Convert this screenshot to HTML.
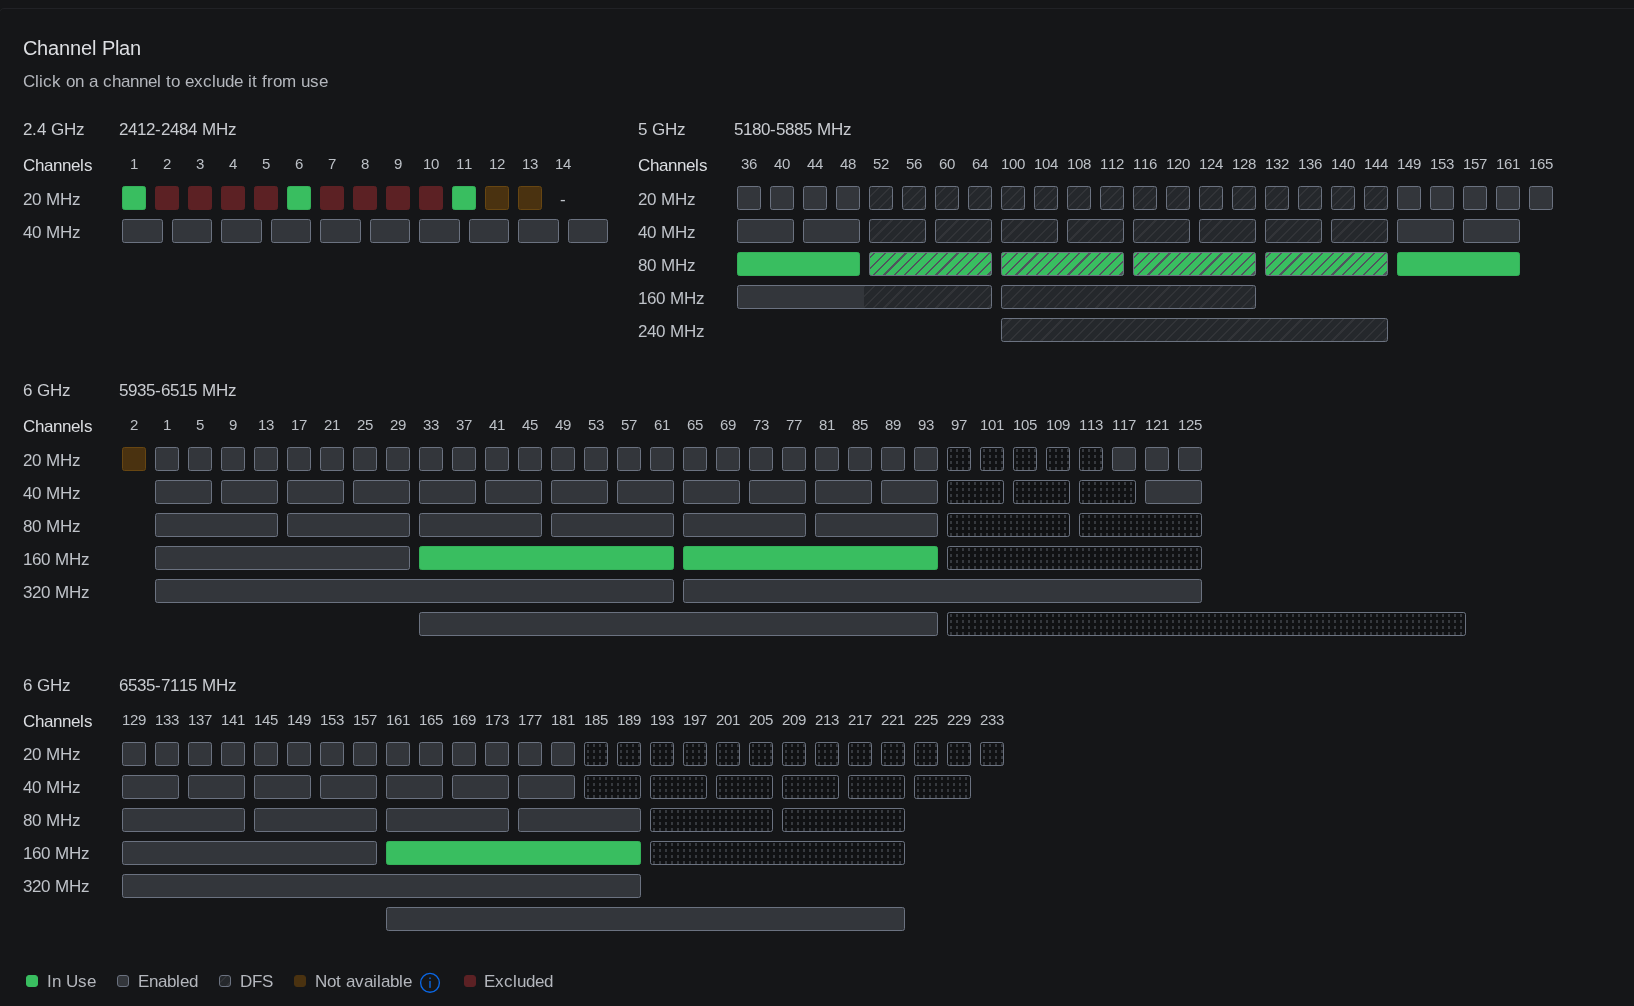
<!DOCTYPE html><html><head><meta charset="utf-8"><style>*{margin:0;padding:0;box-sizing:border-box}
html,body{width:1634px;height:1006px;overflow:hidden;background:#151618;font-family:"Liberation Sans",sans-serif}
.card{position:absolute;left:-1px;top:8px;width:1700px;height:1100px;border:1px solid #212226;border-radius:5px}
.w{position:absolute;left:0;top:0;width:1634px;height:1006px;will-change:transform}
.t{position:absolute;white-space:nowrap;line-height:20px}
.t i{display:inline-block;font-style:normal}
.a4{width:4px}.a5{width:5px}.a6{width:6px}.a8{width:8px}.a9{width:9px}.a10{width:10px}.a11{width:11px}.a12{width:12px}.a13{width:13px}.a14{width:14px}
.b{position:absolute;height:24px;border:1px solid #6b7280;border-radius:2.5px;background:#33363b}
.g{background:#39be60;border-color:#34b159}
.x{background:#5c2124;border-color:#5c2124}
.n{background:#4a3210;border-color:#674612}
.d{background:#25282c repeating-linear-gradient(315deg,#25282c 0,#25282c 1.4px,#323438 1.4px,#323438 2.9px,#25282c 2.9px,#25282c 7.35px)}
.gd{background:#39be60 repeating-linear-gradient(315deg,#39be60 0,#39be60 1.4px,#50545e 1.4px,#50545e 2.9px,#39be60 2.9px,#39be60 7.35px)}
.u{background-color:#36393e;background-image:linear-gradient(90deg,#111214 0,#111214 2px,transparent 2px,transparent 4px,#111214 4px),linear-gradient(#111214 0,#111214 1px,transparent 1px,transparent 4px,#111214 4px);background-size:6px 6px}
.h{background:linear-gradient(90deg,#33363b 50%,transparent 50%),repeating-linear-gradient(315deg,#25282c 0,#25282c 1.4px,#323438 1.4px,#323438 2.9px,#25282c 2.9px,#25282c 7.35px)}
.lg{position:absolute;width:12px;height:12px;border-radius:3px;border:1px solid}
</style></head><body><div class="card"></div><div class="w"><div class="t" style="left:23px;top:38px;font-size:20px;color:#dcdee2"><i class="a14">C</i><i class="a11">h</i><i class="a11">a</i><i class="a11">n</i><i class="a11">n</i><i class="a11">e</i><i class="a4">l</i><i class="a6">&nbsp;</i><i class="a13">P</i><i class="a4">l</i><i class="a11">a</i><i class="a11">n</i></div><div class="t" style="left:23px;top:72px;font-size:17px;color:#b4b7bd"><i class="a12">C</i><i class="a4">l</i><i class="a4">i</i><i class="a9">c</i><i class="a9">k</i><i class="a5">&nbsp;</i><i class="a9">o</i><i class="a9">n</i><i class="a5">&nbsp;</i><i class="a9">a</i><i class="a5">&nbsp;</i><i class="a9">c</i><i class="a9">h</i><i class="a9">a</i><i class="a9">n</i><i class="a9">n</i><i class="a9">e</i><i class="a4">l</i><i class="a5">&nbsp;</i><i class="a5">t</i><i class="a9">o</i><i class="a5">&nbsp;</i><i class="a9">e</i><i class="a9">x</i><i class="a9">c</i><i class="a4">l</i><i class="a9">u</i><i class="a9">d</i><i class="a9">e</i><i class="a5">&nbsp;</i><i class="a4">i</i><i class="a5">t</i><i class="a5">&nbsp;</i><i class="a5">f</i><i class="a6">r</i><i class="a9">o</i><i class="a14">m</i><i class="a5">&nbsp;</i><i class="a9">u</i><i class="a9">s</i><i class="a9">e</i></div><div class="t" style="left:23px;top:120px;font-size:17px;color:#c9ccd1"><i class="a9">2</i><i class="a5">.</i><i class="a9">4</i><i class="a5">&nbsp;</i><i class="a13">G</i><i class="a12">H</i><i class="a9">z</i></div><div class="t" style="left:119px;top:120px;font-size:17px;color:#c9ccd1"><i class="a9">2</i><i class="a9">4</i><i class="a9">1</i><i class="a9">2</i><i class="a6">-</i><i class="a9">2</i><i class="a9">4</i><i class="a9">8</i><i class="a9">4</i><i class="a5">&nbsp;</i><i class="a14">M</i><i class="a12">H</i><i class="a9">z</i></div><div class="t" style="left:23px;top:156px;font-size:17px;color:#dcdee2"><i class="a12">C</i><i class="a9">h</i><i class="a9">a</i><i class="a9">n</i><i class="a9">n</i><i class="a9">e</i><i class="a4">l</i><i class="a9">s</i></div><div class="t" style="left:130px;top:154px;font-size:15px;color:#bcc0c6"><i class="a8">1</i></div><div class="t" style="left:163px;top:154px;font-size:15px;color:#bcc0c6"><i class="a8">2</i></div><div class="t" style="left:196px;top:154px;font-size:15px;color:#bcc0c6"><i class="a8">3</i></div><div class="t" style="left:229px;top:154px;font-size:15px;color:#bcc0c6"><i class="a8">4</i></div><div class="t" style="left:262px;top:154px;font-size:15px;color:#bcc0c6"><i class="a8">5</i></div><div class="t" style="left:295px;top:154px;font-size:15px;color:#bcc0c6"><i class="a8">6</i></div><div class="t" style="left:328px;top:154px;font-size:15px;color:#bcc0c6"><i class="a8">7</i></div><div class="t" style="left:361px;top:154px;font-size:15px;color:#bcc0c6"><i class="a8">8</i></div><div class="t" style="left:394px;top:154px;font-size:15px;color:#bcc0c6"><i class="a8">9</i></div><div class="t" style="left:423px;top:154px;font-size:15px;color:#bcc0c6"><i class="a8">1</i><i class="a8">0</i></div><div class="t" style="left:456px;top:154px;font-size:15px;color:#bcc0c6"><i class="a8">1</i><i class="a8">1</i></div><div class="t" style="left:489px;top:154px;font-size:15px;color:#bcc0c6"><i class="a8">1</i><i class="a8">2</i></div><div class="t" style="left:522px;top:154px;font-size:15px;color:#bcc0c6"><i class="a8">1</i><i class="a8">3</i></div><div class="t" style="left:555px;top:154px;font-size:15px;color:#bcc0c6"><i class="a8">1</i><i class="a8">4</i></div><div class="t" style="left:23px;top:190px;font-size:17px;color:#bfc3c9"><i class="a9">2</i><i class="a9">0</i><i class="a5">&nbsp;</i><i class="a14">M</i><i class="a12">H</i><i class="a9">z</i></div><div class="b g" style="left:122px;top:186px;width:24px"></div><div class="b x" style="left:155px;top:186px;width:24px"></div><div class="b x" style="left:188px;top:186px;width:24px"></div><div class="b x" style="left:221px;top:186px;width:24px"></div><div class="b x" style="left:254px;top:186px;width:24px"></div><div class="b g" style="left:287px;top:186px;width:24px"></div><div class="b x" style="left:320px;top:186px;width:24px"></div><div class="b x" style="left:353px;top:186px;width:24px"></div><div class="b x" style="left:386px;top:186px;width:24px"></div><div class="b x" style="left:419px;top:186px;width:24px"></div><div class="b g" style="left:452px;top:186px;width:24px"></div><div class="b n" style="left:485px;top:186px;width:24px"></div><div class="b n" style="left:518px;top:186px;width:24px"></div><div class="t" style="left:560px;top:190px;font-size:17px;color:#bfc3c9"><i class="a6">-</i></div><div class="t" style="left:23px;top:223px;font-size:17px;color:#bfc3c9"><i class="a9">4</i><i class="a9">0</i><i class="a5">&nbsp;</i><i class="a14">M</i><i class="a12">H</i><i class="a9">z</i></div><div class="b " style="left:122.0px;top:219px;width:40.5px"></div><div class="b " style="left:171.5px;top:219px;width:40.5px"></div><div class="b " style="left:221.0px;top:219px;width:40.5px"></div><div class="b " style="left:270.5px;top:219px;width:40.5px"></div><div class="b " style="left:320.0px;top:219px;width:40.5px"></div><div class="b " style="left:369.5px;top:219px;width:40.5px"></div><div class="b " style="left:419.0px;top:219px;width:40.5px"></div><div class="b " style="left:468.5px;top:219px;width:40.5px"></div><div class="b " style="left:518.0px;top:219px;width:40.5px"></div><div class="b " style="left:567.5px;top:219px;width:40.5px"></div><div class="t" style="left:638px;top:120px;font-size:17px;color:#c9ccd1"><i class="a9">5</i><i class="a5">&nbsp;</i><i class="a13">G</i><i class="a12">H</i><i class="a9">z</i></div><div class="t" style="left:734px;top:120px;font-size:17px;color:#c9ccd1"><i class="a9">5</i><i class="a9">1</i><i class="a9">8</i><i class="a9">0</i><i class="a6">-</i><i class="a9">5</i><i class="a9">8</i><i class="a9">8</i><i class="a9">5</i><i class="a5">&nbsp;</i><i class="a14">M</i><i class="a12">H</i><i class="a9">z</i></div><div class="t" style="left:638px;top:156px;font-size:17px;color:#dcdee2"><i class="a12">C</i><i class="a9">h</i><i class="a9">a</i><i class="a9">n</i><i class="a9">n</i><i class="a9">e</i><i class="a4">l</i><i class="a9">s</i></div><div class="t" style="left:741px;top:154px;font-size:15px;color:#bcc0c6"><i class="a8">3</i><i class="a8">6</i></div><div class="t" style="left:774px;top:154px;font-size:15px;color:#bcc0c6"><i class="a8">4</i><i class="a8">0</i></div><div class="t" style="left:807px;top:154px;font-size:15px;color:#bcc0c6"><i class="a8">4</i><i class="a8">4</i></div><div class="t" style="left:840px;top:154px;font-size:15px;color:#bcc0c6"><i class="a8">4</i><i class="a8">8</i></div><div class="t" style="left:873px;top:154px;font-size:15px;color:#bcc0c6"><i class="a8">5</i><i class="a8">2</i></div><div class="t" style="left:906px;top:154px;font-size:15px;color:#bcc0c6"><i class="a8">5</i><i class="a8">6</i></div><div class="t" style="left:939px;top:154px;font-size:15px;color:#bcc0c6"><i class="a8">6</i><i class="a8">0</i></div><div class="t" style="left:972px;top:154px;font-size:15px;color:#bcc0c6"><i class="a8">6</i><i class="a8">4</i></div><div class="t" style="left:1001px;top:154px;font-size:15px;color:#bcc0c6"><i class="a8">1</i><i class="a8">0</i><i class="a8">0</i></div><div class="t" style="left:1034px;top:154px;font-size:15px;color:#bcc0c6"><i class="a8">1</i><i class="a8">0</i><i class="a8">4</i></div><div class="t" style="left:1067px;top:154px;font-size:15px;color:#bcc0c6"><i class="a8">1</i><i class="a8">0</i><i class="a8">8</i></div><div class="t" style="left:1100px;top:154px;font-size:15px;color:#bcc0c6"><i class="a8">1</i><i class="a8">1</i><i class="a8">2</i></div><div class="t" style="left:1133px;top:154px;font-size:15px;color:#bcc0c6"><i class="a8">1</i><i class="a8">1</i><i class="a8">6</i></div><div class="t" style="left:1166px;top:154px;font-size:15px;color:#bcc0c6"><i class="a8">1</i><i class="a8">2</i><i class="a8">0</i></div><div class="t" style="left:1199px;top:154px;font-size:15px;color:#bcc0c6"><i class="a8">1</i><i class="a8">2</i><i class="a8">4</i></div><div class="t" style="left:1232px;top:154px;font-size:15px;color:#bcc0c6"><i class="a8">1</i><i class="a8">2</i><i class="a8">8</i></div><div class="t" style="left:1265px;top:154px;font-size:15px;color:#bcc0c6"><i class="a8">1</i><i class="a8">3</i><i class="a8">2</i></div><div class="t" style="left:1298px;top:154px;font-size:15px;color:#bcc0c6"><i class="a8">1</i><i class="a8">3</i><i class="a8">6</i></div><div class="t" style="left:1331px;top:154px;font-size:15px;color:#bcc0c6"><i class="a8">1</i><i class="a8">4</i><i class="a8">0</i></div><div class="t" style="left:1364px;top:154px;font-size:15px;color:#bcc0c6"><i class="a8">1</i><i class="a8">4</i><i class="a8">4</i></div><div class="t" style="left:1397px;top:154px;font-size:15px;color:#bcc0c6"><i class="a8">1</i><i class="a8">4</i><i class="a8">9</i></div><div class="t" style="left:1430px;top:154px;font-size:15px;color:#bcc0c6"><i class="a8">1</i><i class="a8">5</i><i class="a8">3</i></div><div class="t" style="left:1463px;top:154px;font-size:15px;color:#bcc0c6"><i class="a8">1</i><i class="a8">5</i><i class="a8">7</i></div><div class="t" style="left:1496px;top:154px;font-size:15px;color:#bcc0c6"><i class="a8">1</i><i class="a8">6</i><i class="a8">1</i></div><div class="t" style="left:1529px;top:154px;font-size:15px;color:#bcc0c6"><i class="a8">1</i><i class="a8">6</i><i class="a8">5</i></div><div class="t" style="left:638px;top:190px;font-size:17px;color:#bfc3c9"><i class="a9">2</i><i class="a9">0</i><i class="a5">&nbsp;</i><i class="a14">M</i><i class="a12">H</i><i class="a9">z</i></div><div class="b " style="left:737px;top:186px;width:24px"></div><div class="b " style="left:770px;top:186px;width:24px"></div><div class="b " style="left:803px;top:186px;width:24px"></div><div class="b " style="left:836px;top:186px;width:24px"></div><div class="b d" style="left:869px;top:186px;width:24px"></div><div class="b d" style="left:902px;top:186px;width:24px"></div><div class="b d" style="left:935px;top:186px;width:24px"></div><div class="b d" style="left:968px;top:186px;width:24px"></div><div class="b d" style="left:1001px;top:186px;width:24px"></div><div class="b d" style="left:1034px;top:186px;width:24px"></div><div class="b d" style="left:1067px;top:186px;width:24px"></div><div class="b d" style="left:1100px;top:186px;width:24px"></div><div class="b d" style="left:1133px;top:186px;width:24px"></div><div class="b d" style="left:1166px;top:186px;width:24px"></div><div class="b d" style="left:1199px;top:186px;width:24px"></div><div class="b d" style="left:1232px;top:186px;width:24px"></div><div class="b d" style="left:1265px;top:186px;width:24px"></div><div class="b d" style="left:1298px;top:186px;width:24px"></div><div class="b d" style="left:1331px;top:186px;width:24px"></div><div class="b d" style="left:1364px;top:186px;width:24px"></div><div class="b " style="left:1397px;top:186px;width:24px"></div><div class="b " style="left:1430px;top:186px;width:24px"></div><div class="b " style="left:1463px;top:186px;width:24px"></div><div class="b " style="left:1496px;top:186px;width:24px"></div><div class="b " style="left:1529px;top:186px;width:24px"></div><div class="t" style="left:638px;top:223px;font-size:17px;color:#bfc3c9"><i class="a9">4</i><i class="a9">0</i><i class="a5">&nbsp;</i><i class="a14">M</i><i class="a12">H</i><i class="a9">z</i></div><div class="b " style="left:737px;top:219px;width:57px"></div><div class="b " style="left:803px;top:219px;width:57px"></div><div class="b d" style="left:869px;top:219px;width:57px"></div><div class="b d" style="left:935px;top:219px;width:57px"></div><div class="b d" style="left:1001px;top:219px;width:57px"></div><div class="b d" style="left:1067px;top:219px;width:57px"></div><div class="b d" style="left:1133px;top:219px;width:57px"></div><div class="b d" style="left:1199px;top:219px;width:57px"></div><div class="b d" style="left:1265px;top:219px;width:57px"></div><div class="b d" style="left:1331px;top:219px;width:57px"></div><div class="b " style="left:1397px;top:219px;width:57px"></div><div class="b " style="left:1463px;top:219px;width:57px"></div><div class="t" style="left:638px;top:256px;font-size:17px;color:#bfc3c9"><i class="a9">8</i><i class="a9">0</i><i class="a5">&nbsp;</i><i class="a14">M</i><i class="a12">H</i><i class="a9">z</i></div><div class="b g" style="left:737px;top:252px;width:123px"></div><div class="b gd" style="left:869px;top:252px;width:123px"></div><div class="b gd" style="left:1001px;top:252px;width:123px"></div><div class="b gd" style="left:1133px;top:252px;width:123px"></div><div class="b gd" style="left:1265px;top:252px;width:123px"></div><div class="b g" style="left:1397px;top:252px;width:123px"></div><div class="t" style="left:638px;top:289px;font-size:17px;color:#bfc3c9"><i class="a9">1</i><i class="a9">6</i><i class="a9">0</i><i class="a5">&nbsp;</i><i class="a14">M</i><i class="a12">H</i><i class="a9">z</i></div><div class="b h" style="left:737px;top:285px;width:255px"></div><div class="b d" style="left:1001px;top:285px;width:255px"></div><div class="t" style="left:638px;top:322px;font-size:17px;color:#bfc3c9"><i class="a9">2</i><i class="a9">4</i><i class="a9">0</i><i class="a5">&nbsp;</i><i class="a14">M</i><i class="a12">H</i><i class="a9">z</i></div><div class="b d" style="left:1001px;top:318px;width:387px"></div><div class="t" style="left:23px;top:381px;font-size:17px;color:#c9ccd1"><i class="a9">6</i><i class="a5">&nbsp;</i><i class="a13">G</i><i class="a12">H</i><i class="a9">z</i></div><div class="t" style="left:119px;top:381px;font-size:17px;color:#c9ccd1"><i class="a9">5</i><i class="a9">9</i><i class="a9">3</i><i class="a9">5</i><i class="a6">-</i><i class="a9">6</i><i class="a9">5</i><i class="a9">1</i><i class="a9">5</i><i class="a5">&nbsp;</i><i class="a14">M</i><i class="a12">H</i><i class="a9">z</i></div><div class="t" style="left:23px;top:417px;font-size:17px;color:#dcdee2"><i class="a12">C</i><i class="a9">h</i><i class="a9">a</i><i class="a9">n</i><i class="a9">n</i><i class="a9">e</i><i class="a4">l</i><i class="a9">s</i></div><div class="t" style="left:130px;top:415px;font-size:15px;color:#bcc0c6"><i class="a8">2</i></div><div class="t" style="left:163px;top:415px;font-size:15px;color:#bcc0c6"><i class="a8">1</i></div><div class="t" style="left:196px;top:415px;font-size:15px;color:#bcc0c6"><i class="a8">5</i></div><div class="t" style="left:229px;top:415px;font-size:15px;color:#bcc0c6"><i class="a8">9</i></div><div class="t" style="left:258px;top:415px;font-size:15px;color:#bcc0c6"><i class="a8">1</i><i class="a8">3</i></div><div class="t" style="left:291px;top:415px;font-size:15px;color:#bcc0c6"><i class="a8">1</i><i class="a8">7</i></div><div class="t" style="left:324px;top:415px;font-size:15px;color:#bcc0c6"><i class="a8">2</i><i class="a8">1</i></div><div class="t" style="left:357px;top:415px;font-size:15px;color:#bcc0c6"><i class="a8">2</i><i class="a8">5</i></div><div class="t" style="left:390px;top:415px;font-size:15px;color:#bcc0c6"><i class="a8">2</i><i class="a8">9</i></div><div class="t" style="left:423px;top:415px;font-size:15px;color:#bcc0c6"><i class="a8">3</i><i class="a8">3</i></div><div class="t" style="left:456px;top:415px;font-size:15px;color:#bcc0c6"><i class="a8">3</i><i class="a8">7</i></div><div class="t" style="left:489px;top:415px;font-size:15px;color:#bcc0c6"><i class="a8">4</i><i class="a8">1</i></div><div class="t" style="left:522px;top:415px;font-size:15px;color:#bcc0c6"><i class="a8">4</i><i class="a8">5</i></div><div class="t" style="left:555px;top:415px;font-size:15px;color:#bcc0c6"><i class="a8">4</i><i class="a8">9</i></div><div class="t" style="left:588px;top:415px;font-size:15px;color:#bcc0c6"><i class="a8">5</i><i class="a8">3</i></div><div class="t" style="left:621px;top:415px;font-size:15px;color:#bcc0c6"><i class="a8">5</i><i class="a8">7</i></div><div class="t" style="left:654px;top:415px;font-size:15px;color:#bcc0c6"><i class="a8">6</i><i class="a8">1</i></div><div class="t" style="left:687px;top:415px;font-size:15px;color:#bcc0c6"><i class="a8">6</i><i class="a8">5</i></div><div class="t" style="left:720px;top:415px;font-size:15px;color:#bcc0c6"><i class="a8">6</i><i class="a8">9</i></div><div class="t" style="left:753px;top:415px;font-size:15px;color:#bcc0c6"><i class="a8">7</i><i class="a8">3</i></div><div class="t" style="left:786px;top:415px;font-size:15px;color:#bcc0c6"><i class="a8">7</i><i class="a8">7</i></div><div class="t" style="left:819px;top:415px;font-size:15px;color:#bcc0c6"><i class="a8">8</i><i class="a8">1</i></div><div class="t" style="left:852px;top:415px;font-size:15px;color:#bcc0c6"><i class="a8">8</i><i class="a8">5</i></div><div class="t" style="left:885px;top:415px;font-size:15px;color:#bcc0c6"><i class="a8">8</i><i class="a8">9</i></div><div class="t" style="left:918px;top:415px;font-size:15px;color:#bcc0c6"><i class="a8">9</i><i class="a8">3</i></div><div class="t" style="left:951px;top:415px;font-size:15px;color:#bcc0c6"><i class="a8">9</i><i class="a8">7</i></div><div class="t" style="left:980px;top:415px;font-size:15px;color:#bcc0c6"><i class="a8">1</i><i class="a8">0</i><i class="a8">1</i></div><div class="t" style="left:1013px;top:415px;font-size:15px;color:#bcc0c6"><i class="a8">1</i><i class="a8">0</i><i class="a8">5</i></div><div class="t" style="left:1046px;top:415px;font-size:15px;color:#bcc0c6"><i class="a8">1</i><i class="a8">0</i><i class="a8">9</i></div><div class="t" style="left:1079px;top:415px;font-size:15px;color:#bcc0c6"><i class="a8">1</i><i class="a8">1</i><i class="a8">3</i></div><div class="t" style="left:1112px;top:415px;font-size:15px;color:#bcc0c6"><i class="a8">1</i><i class="a8">1</i><i class="a8">7</i></div><div class="t" style="left:1145px;top:415px;font-size:15px;color:#bcc0c6"><i class="a8">1</i><i class="a8">2</i><i class="a8">1</i></div><div class="t" style="left:1178px;top:415px;font-size:15px;color:#bcc0c6"><i class="a8">1</i><i class="a8">2</i><i class="a8">5</i></div><div class="t" style="left:23px;top:451px;font-size:17px;color:#bfc3c9"><i class="a9">2</i><i class="a9">0</i><i class="a5">&nbsp;</i><i class="a14">M</i><i class="a12">H</i><i class="a9">z</i></div><div class="b n" style="left:122px;top:447px;width:24px"></div><div class="b " style="left:155px;top:447px;width:24px"></div><div class="b " style="left:188px;top:447px;width:24px"></div><div class="b " style="left:221px;top:447px;width:24px"></div><div class="b " style="left:254px;top:447px;width:24px"></div><div class="b " style="left:287px;top:447px;width:24px"></div><div class="b " style="left:320px;top:447px;width:24px"></div><div class="b " style="left:353px;top:447px;width:24px"></div><div class="b " style="left:386px;top:447px;width:24px"></div><div class="b " style="left:419px;top:447px;width:24px"></div><div class="b " style="left:452px;top:447px;width:24px"></div><div class="b " style="left:485px;top:447px;width:24px"></div><div class="b " style="left:518px;top:447px;width:24px"></div><div class="b " style="left:551px;top:447px;width:24px"></div><div class="b " style="left:584px;top:447px;width:24px"></div><div class="b " style="left:617px;top:447px;width:24px"></div><div class="b " style="left:650px;top:447px;width:24px"></div><div class="b " style="left:683px;top:447px;width:24px"></div><div class="b " style="left:716px;top:447px;width:24px"></div><div class="b " style="left:749px;top:447px;width:24px"></div><div class="b " style="left:782px;top:447px;width:24px"></div><div class="b " style="left:815px;top:447px;width:24px"></div><div class="b " style="left:848px;top:447px;width:24px"></div><div class="b " style="left:881px;top:447px;width:24px"></div><div class="b " style="left:914px;top:447px;width:24px"></div><div class="b u" style="left:947px;top:447px;width:24px"></div><div class="b u" style="left:980px;top:447px;width:24px"></div><div class="b u" style="left:1013px;top:447px;width:24px"></div><div class="b u" style="left:1046px;top:447px;width:24px"></div><div class="b u" style="left:1079px;top:447px;width:24px"></div><div class="b " style="left:1112px;top:447px;width:24px"></div><div class="b " style="left:1145px;top:447px;width:24px"></div><div class="b " style="left:1178px;top:447px;width:24px"></div><div class="t" style="left:23px;top:484px;font-size:17px;color:#bfc3c9"><i class="a9">4</i><i class="a9">0</i><i class="a5">&nbsp;</i><i class="a14">M</i><i class="a12">H</i><i class="a9">z</i></div><div class="b " style="left:155px;top:480px;width:57px"></div><div class="b " style="left:221px;top:480px;width:57px"></div><div class="b " style="left:287px;top:480px;width:57px"></div><div class="b " style="left:353px;top:480px;width:57px"></div><div class="b " style="left:419px;top:480px;width:57px"></div><div class="b " style="left:485px;top:480px;width:57px"></div><div class="b " style="left:551px;top:480px;width:57px"></div><div class="b " style="left:617px;top:480px;width:57px"></div><div class="b " style="left:683px;top:480px;width:57px"></div><div class="b " style="left:749px;top:480px;width:57px"></div><div class="b " style="left:815px;top:480px;width:57px"></div><div class="b " style="left:881px;top:480px;width:57px"></div><div class="b u" style="left:947px;top:480px;width:57px"></div><div class="b u" style="left:1013px;top:480px;width:57px"></div><div class="b u" style="left:1079px;top:480px;width:57px"></div><div class="b " style="left:1145px;top:480px;width:57px"></div><div class="t" style="left:23px;top:517px;font-size:17px;color:#bfc3c9"><i class="a9">8</i><i class="a9">0</i><i class="a5">&nbsp;</i><i class="a14">M</i><i class="a12">H</i><i class="a9">z</i></div><div class="b " style="left:155px;top:513px;width:123px"></div><div class="b " style="left:287px;top:513px;width:123px"></div><div class="b " style="left:419px;top:513px;width:123px"></div><div class="b " style="left:551px;top:513px;width:123px"></div><div class="b " style="left:683px;top:513px;width:123px"></div><div class="b " style="left:815px;top:513px;width:123px"></div><div class="b u" style="left:947px;top:513px;width:123px"></div><div class="b u" style="left:1079px;top:513px;width:123px"></div><div class="t" style="left:23px;top:550px;font-size:17px;color:#bfc3c9"><i class="a9">1</i><i class="a9">6</i><i class="a9">0</i><i class="a5">&nbsp;</i><i class="a14">M</i><i class="a12">H</i><i class="a9">z</i></div><div class="b " style="left:155px;top:546px;width:255px"></div><div class="b g" style="left:419px;top:546px;width:255px"></div><div class="b g" style="left:683px;top:546px;width:255px"></div><div class="b u" style="left:947px;top:546px;width:255px"></div><div class="t" style="left:23px;top:583px;font-size:17px;color:#bfc3c9"><i class="a9">3</i><i class="a9">2</i><i class="a9">0</i><i class="a5">&nbsp;</i><i class="a14">M</i><i class="a12">H</i><i class="a9">z</i></div><div class="b " style="left:155px;top:579px;width:519px"></div><div class="b " style="left:683px;top:579px;width:519px"></div><div class="b " style="left:419px;top:612px;width:519px"></div><div class="b u" style="left:947px;top:612px;width:519px"></div><div class="t" style="left:23px;top:676px;font-size:17px;color:#c9ccd1"><i class="a9">6</i><i class="a5">&nbsp;</i><i class="a13">G</i><i class="a12">H</i><i class="a9">z</i></div><div class="t" style="left:119px;top:676px;font-size:17px;color:#c9ccd1"><i class="a9">6</i><i class="a9">5</i><i class="a9">3</i><i class="a9">5</i><i class="a6">-</i><i class="a9">7</i><i class="a9">1</i><i class="a9">1</i><i class="a9">5</i><i class="a5">&nbsp;</i><i class="a14">M</i><i class="a12">H</i><i class="a9">z</i></div><div class="t" style="left:23px;top:712px;font-size:17px;color:#dcdee2"><i class="a12">C</i><i class="a9">h</i><i class="a9">a</i><i class="a9">n</i><i class="a9">n</i><i class="a9">e</i><i class="a4">l</i><i class="a9">s</i></div><div class="t" style="left:122px;top:710px;font-size:15px;color:#bcc0c6"><i class="a8">1</i><i class="a8">2</i><i class="a8">9</i></div><div class="t" style="left:155px;top:710px;font-size:15px;color:#bcc0c6"><i class="a8">1</i><i class="a8">3</i><i class="a8">3</i></div><div class="t" style="left:188px;top:710px;font-size:15px;color:#bcc0c6"><i class="a8">1</i><i class="a8">3</i><i class="a8">7</i></div><div class="t" style="left:221px;top:710px;font-size:15px;color:#bcc0c6"><i class="a8">1</i><i class="a8">4</i><i class="a8">1</i></div><div class="t" style="left:254px;top:710px;font-size:15px;color:#bcc0c6"><i class="a8">1</i><i class="a8">4</i><i class="a8">5</i></div><div class="t" style="left:287px;top:710px;font-size:15px;color:#bcc0c6"><i class="a8">1</i><i class="a8">4</i><i class="a8">9</i></div><div class="t" style="left:320px;top:710px;font-size:15px;color:#bcc0c6"><i class="a8">1</i><i class="a8">5</i><i class="a8">3</i></div><div class="t" style="left:353px;top:710px;font-size:15px;color:#bcc0c6"><i class="a8">1</i><i class="a8">5</i><i class="a8">7</i></div><div class="t" style="left:386px;top:710px;font-size:15px;color:#bcc0c6"><i class="a8">1</i><i class="a8">6</i><i class="a8">1</i></div><div class="t" style="left:419px;top:710px;font-size:15px;color:#bcc0c6"><i class="a8">1</i><i class="a8">6</i><i class="a8">5</i></div><div class="t" style="left:452px;top:710px;font-size:15px;color:#bcc0c6"><i class="a8">1</i><i class="a8">6</i><i class="a8">9</i></div><div class="t" style="left:485px;top:710px;font-size:15px;color:#bcc0c6"><i class="a8">1</i><i class="a8">7</i><i class="a8">3</i></div><div class="t" style="left:518px;top:710px;font-size:15px;color:#bcc0c6"><i class="a8">1</i><i class="a8">7</i><i class="a8">7</i></div><div class="t" style="left:551px;top:710px;font-size:15px;color:#bcc0c6"><i class="a8">1</i><i class="a8">8</i><i class="a8">1</i></div><div class="t" style="left:584px;top:710px;font-size:15px;color:#bcc0c6"><i class="a8">1</i><i class="a8">8</i><i class="a8">5</i></div><div class="t" style="left:617px;top:710px;font-size:15px;color:#bcc0c6"><i class="a8">1</i><i class="a8">8</i><i class="a8">9</i></div><div class="t" style="left:650px;top:710px;font-size:15px;color:#bcc0c6"><i class="a8">1</i><i class="a8">9</i><i class="a8">3</i></div><div class="t" style="left:683px;top:710px;font-size:15px;color:#bcc0c6"><i class="a8">1</i><i class="a8">9</i><i class="a8">7</i></div><div class="t" style="left:716px;top:710px;font-size:15px;color:#bcc0c6"><i class="a8">2</i><i class="a8">0</i><i class="a8">1</i></div><div class="t" style="left:749px;top:710px;font-size:15px;color:#bcc0c6"><i class="a8">2</i><i class="a8">0</i><i class="a8">5</i></div><div class="t" style="left:782px;top:710px;font-size:15px;color:#bcc0c6"><i class="a8">2</i><i class="a8">0</i><i class="a8">9</i></div><div class="t" style="left:815px;top:710px;font-size:15px;color:#bcc0c6"><i class="a8">2</i><i class="a8">1</i><i class="a8">3</i></div><div class="t" style="left:848px;top:710px;font-size:15px;color:#bcc0c6"><i class="a8">2</i><i class="a8">1</i><i class="a8">7</i></div><div class="t" style="left:881px;top:710px;font-size:15px;color:#bcc0c6"><i class="a8">2</i><i class="a8">2</i><i class="a8">1</i></div><div class="t" style="left:914px;top:710px;font-size:15px;color:#bcc0c6"><i class="a8">2</i><i class="a8">2</i><i class="a8">5</i></div><div class="t" style="left:947px;top:710px;font-size:15px;color:#bcc0c6"><i class="a8">2</i><i class="a8">2</i><i class="a8">9</i></div><div class="t" style="left:980px;top:710px;font-size:15px;color:#bcc0c6"><i class="a8">2</i><i class="a8">3</i><i class="a8">3</i></div><div class="t" style="left:23px;top:745px;font-size:17px;color:#bfc3c9"><i class="a9">2</i><i class="a9">0</i><i class="a5">&nbsp;</i><i class="a14">M</i><i class="a12">H</i><i class="a9">z</i></div><div class="b " style="left:122px;top:742px;width:24px"></div><div class="b " style="left:155px;top:742px;width:24px"></div><div class="b " style="left:188px;top:742px;width:24px"></div><div class="b " style="left:221px;top:742px;width:24px"></div><div class="b " style="left:254px;top:742px;width:24px"></div><div class="b " style="left:287px;top:742px;width:24px"></div><div class="b " style="left:320px;top:742px;width:24px"></div><div class="b " style="left:353px;top:742px;width:24px"></div><div class="b " style="left:386px;top:742px;width:24px"></div><div class="b " style="left:419px;top:742px;width:24px"></div><div class="b " style="left:452px;top:742px;width:24px"></div><div class="b " style="left:485px;top:742px;width:24px"></div><div class="b " style="left:518px;top:742px;width:24px"></div><div class="b " style="left:551px;top:742px;width:24px"></div><div class="b u" style="left:584px;top:742px;width:24px"></div><div class="b u" style="left:617px;top:742px;width:24px"></div><div class="b u" style="left:650px;top:742px;width:24px"></div><div class="b u" style="left:683px;top:742px;width:24px"></div><div class="b u" style="left:716px;top:742px;width:24px"></div><div class="b u" style="left:749px;top:742px;width:24px"></div><div class="b u" style="left:782px;top:742px;width:24px"></div><div class="b u" style="left:815px;top:742px;width:24px"></div><div class="b u" style="left:848px;top:742px;width:24px"></div><div class="b u" style="left:881px;top:742px;width:24px"></div><div class="b u" style="left:914px;top:742px;width:24px"></div><div class="b u" style="left:947px;top:742px;width:24px"></div><div class="b u" style="left:980px;top:742px;width:24px"></div><div class="t" style="left:23px;top:778px;font-size:17px;color:#bfc3c9"><i class="a9">4</i><i class="a9">0</i><i class="a5">&nbsp;</i><i class="a14">M</i><i class="a12">H</i><i class="a9">z</i></div><div class="b " style="left:122px;top:775px;width:57px"></div><div class="b " style="left:188px;top:775px;width:57px"></div><div class="b " style="left:254px;top:775px;width:57px"></div><div class="b " style="left:320px;top:775px;width:57px"></div><div class="b " style="left:386px;top:775px;width:57px"></div><div class="b " style="left:452px;top:775px;width:57px"></div><div class="b " style="left:518px;top:775px;width:57px"></div><div class="b u" style="left:584px;top:775px;width:57px"></div><div class="b u" style="left:650px;top:775px;width:57px"></div><div class="b u" style="left:716px;top:775px;width:57px"></div><div class="b u" style="left:782px;top:775px;width:57px"></div><div class="b u" style="left:848px;top:775px;width:57px"></div><div class="b u" style="left:914px;top:775px;width:57px"></div><div class="t" style="left:23px;top:811px;font-size:17px;color:#bfc3c9"><i class="a9">8</i><i class="a9">0</i><i class="a5">&nbsp;</i><i class="a14">M</i><i class="a12">H</i><i class="a9">z</i></div><div class="b " style="left:122px;top:808px;width:123px"></div><div class="b " style="left:254px;top:808px;width:123px"></div><div class="b " style="left:386px;top:808px;width:123px"></div><div class="b " style="left:518px;top:808px;width:123px"></div><div class="b u" style="left:650px;top:808px;width:123px"></div><div class="b u" style="left:782px;top:808px;width:123px"></div><div class="t" style="left:23px;top:844px;font-size:17px;color:#bfc3c9"><i class="a9">1</i><i class="a9">6</i><i class="a9">0</i><i class="a5">&nbsp;</i><i class="a14">M</i><i class="a12">H</i><i class="a9">z</i></div><div class="b " style="left:122px;top:841px;width:255px"></div><div class="b g" style="left:386px;top:841px;width:255px"></div><div class="b u" style="left:650px;top:841px;width:255px"></div><div class="t" style="left:23px;top:877px;font-size:17px;color:#bfc3c9"><i class="a9">3</i><i class="a9">2</i><i class="a9">0</i><i class="a5">&nbsp;</i><i class="a14">M</i><i class="a12">H</i><i class="a9">z</i></div><div class="b " style="left:122px;top:874px;width:519px"></div><div class="b " style="left:386px;top:907px;width:519px"></div><div class="lg" style="left:26px;top:975px;background:#39be60;border-color:#39be60"></div><div class="t" style="left:47px;top:972px;font-size:17px;color:#b4b7bd"><i class="a5">I</i><i class="a9">n</i><i class="a5">&nbsp;</i><i class="a12">U</i><i class="a9">s</i><i class="a9">e</i></div><div class="lg" style="left:117px;top:975px;background:#33363b;border-color:#6b7280"></div><div class="t" style="left:138px;top:972px;font-size:17px;color:#b4b7bd"><i class="a11">E</i><i class="a9">n</i><i class="a9">a</i><i class="a9">b</i><i class="a4">l</i><i class="a9">e</i><i class="a9">d</i></div><div class="lg" style="left:219px;top:975px;background:#25282c repeating-linear-gradient(315deg,#25282c 0,#25282c 1.4px,#323438 1.4px,#323438 2.9px,#25282c 2.9px,#25282c 7.35px);border-color:#6b7280"></div><div class="t" style="left:240px;top:972px;font-size:17px;color:#b4b7bd"><i class="a12">D</i><i class="a10">F</i><i class="a11">S</i></div><div class="lg" style="left:294px;top:975px;background:#4a3210;border-color:#4a3210"></div><div class="t" style="left:315px;top:972px;font-size:17px;color:#b4b7bd"><i class="a12">N</i><i class="a9">o</i><i class="a5">t</i><i class="a5">&nbsp;</i><i class="a9">a</i><i class="a9">v</i><i class="a9">a</i><i class="a4">i</i><i class="a4">l</i><i class="a9">a</i><i class="a9">b</i><i class="a4">l</i><i class="a9">e</i></div><svg style="position:absolute;left:419px;top:972px" width="22" height="22" viewBox="0 0 22 22"><circle cx="11" cy="10.8" r="9.4" fill="none" stroke="#0b68e6" stroke-width="1.35"/><rect x="10.2" y="8.9" width="1.6" height="7" fill="#0b5bc8"/><rect x="10.2" y="5.5" width="1.6" height="1.6" fill="#0b5bc8"/></svg><div class="lg" style="left:463.5px;top:975px;background:#5c2124;border-color:#5c2124"></div><div class="t" style="left:484px;top:972px;font-size:17px;color:#b4b7bd"><i class="a11">E</i><i class="a9">x</i><i class="a9">c</i><i class="a4">l</i><i class="a9">u</i><i class="a9">d</i><i class="a9">e</i><i class="a9">d</i></div></div></body></html>
